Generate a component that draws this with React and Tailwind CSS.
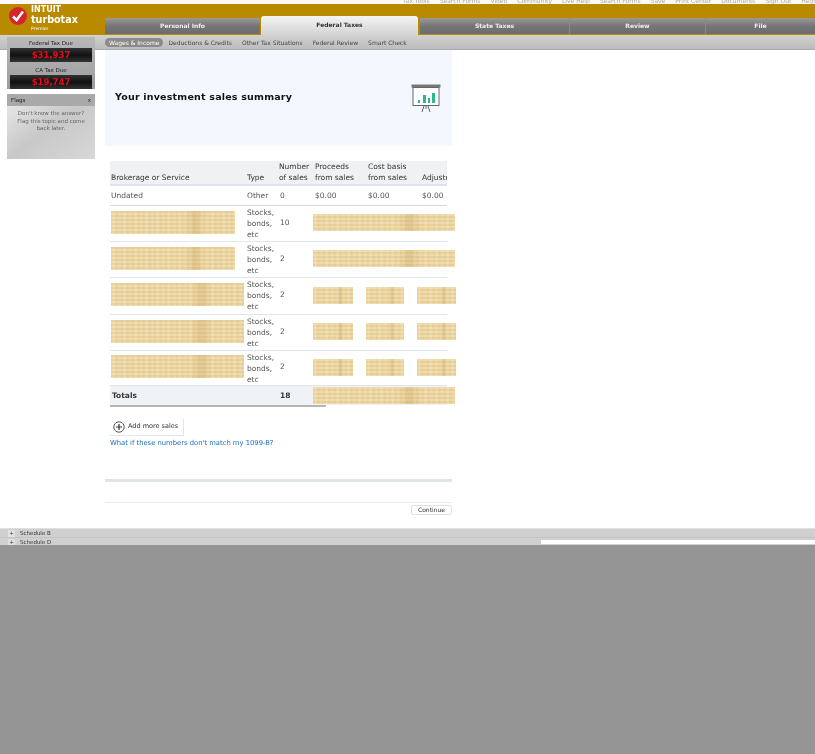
import React from 'react';

const tabs = [
  { name: 'Personal Info', w: 'w-[155px]' },
  { name: 'Federal Taxes', w: 'w-[157px]', active: true },
  { name: 'State Taxes', w: 'w-[149px]' },
  { name: 'Review', w: 'w-[135px]' },
  { name: 'File', w: 'flex-1' },
];

const subTabs = ['Wages & Income', 'Deductions & Credits', 'Other Tax Situations', 'Federal Review', 'Smart Check'];

const topLinks = ['Tax Tools', 'Search Forms', 'Video', 'Community', 'Live Help', 'Search Forms', 'Save', 'Print Center', 'Documents', 'Sign Out', 'Help'];

const gridCols = 'grid grid-cols-[137px_32px_36px_53px_54px_25px]';

// blurred-out paper strip used for the hidden values
const Redact = ({ className }) => (
  <div
    className={`bg-[#eed9a6] bg-[image:linear-gradient(90deg,transparent_60%,rgba(190,150,80,0.28)_68%,transparent_76%),repeating-linear-gradient(0deg,rgba(255,245,215,0.35)_0px,rgba(200,165,100,0.22)_2px,rgba(255,245,215,0.35)_4px),repeating-linear-gradient(90deg,#e9cf95_0px,#f0dfb4_3px,#e8cd92_5px,#efdaa9_9px,#e6ca8d_11px)] ${className}`}
  />
);

const SaleRow = ({ count, nameW, wide, rowH }) => (
  <div className={`${gridCols} ${rowH} border-b border-[#dfe6ee]`}>
    <div className="flex items-center pl-px pb-[3px]">
      <Redact className={`${nameW} h-[23px]`} />
    </div>
    <div className="leading-[11px] pt-px">
      Stocks,
      <br />
      bonds,
      <br />
      etc
    </div>
    <div className="flex items-center pl-px pb-[3px]">{count}</div>
    {wide ? (
      <div className="col-span-3 flex items-center pb-[2px]">
        <Redact className="w-[142px] h-[17px] shrink-0 -ml-[2px]" />
      </div>
    ) : (
      <div className="col-span-3 flex items-center gap-[13px] -ml-[2px] pb-[2px]">
        <Redact className="w-[40px] h-[17px] shrink-0" />
        <Redact className="w-[38px] h-[17px] shrink-0" />
        <Redact className="w-[39px] h-[17px] shrink-0" />
      </div>
    )}
  </div>
);

export default function App() {
  return (
    <div className="h-[754px] w-[815px] overflow-hidden flex flex-col bg-white font-['DejaVu_Sans',sans-serif] text-[7.5px] text-[#555] blur-[0.7px]">
      {/* Top strip */}
      <div className="h-[4px] overflow-hidden flex justify-end gap-[10px] text-[6px] leading-[2px] text-[#aaa] bg-[#fdfaf6] whitespace-nowrap">
        {topLinks.map((l, i) => (
          <span key={i}>{l}</span>
        ))}
      </div>

      {/* Gold header */}
      <div className="h-[31px] bg-[#b98a00] flex items-end">
        <div className="w-[105px] h-full flex items-start pl-[9px] pt-[2px] gap-[4px] shrink-0">
          <svg width="18" height="18" viewBox="0 0 18 18" className="shrink-0 mt-px">
            <circle cx="9" cy="9" r="9" fill="#d8232a" />
            <path d="M4 9.5 L7.5 13 L14 4.5" fill="none" stroke="#fff" strokeWidth="2.6" />
          </svg>
          <div className="text-white font-bold leading-none">
            <div className="text-[8px]">INTUIT</div>
            <div className="text-[9.6px] mt-px">turbotax</div>
            <div className="text-[4.5px] font-normal mt-[2px]">Premier</div>
          </div>
        </div>
        {tabs.map((t) => (
          <div
            key={t.name}
            className={
              t.active
                ? `${t.w} h-[20px] mr-[2px] -mb-px pb-[4px] rounded-t-[3px] bg-gradient-to-b from-[#f4f4f4] to-[#d2d2d2] text-[#333] font-bold text-[6px] flex items-center justify-center`
                : `${t.w} ${t.name === 'File' ? '' : 'mr-px'} h-[16px] mb-px pb-[2px] bg-gradient-to-b from-[#9a9a9a] via-[#767676] to-[#6c6c6c] text-[#eee] font-bold text-[6px] flex items-center justify-center`
            }
          >
            {t.name}
          </div>
        ))}
      </div>

      {/* Sub navigation */}
      <div className="h-[15px] bg-gradient-to-b from-[#d2d2d2] to-[#bdbdbd] border-b border-[#aaa] flex items-center pl-[105px] gap-[10px] text-[6px] text-[#444]">
        {subTabs.map((s, i) => (
          <span
            key={s}
            className={i === 0 ? 'bg-[#8a8a8a] text-white rounded-full px-[4px] py-px leading-[7px] -mr-[5px]' : 'leading-[7px]'}
          >
            {s}
          </span>
        ))}
      </div>

      {/* Body */}
      <div className="flex-1 flex min-h-0">
        <aside className="w-[105px] shrink-0 pl-[7px]">
          <div className="w-[88px] h-[52px] -mt-[13px] bg-gradient-to-b from-[#b9b9b9] to-[#9c9c9c] px-[3px] pt-[2px] text-center text-[5.5px] text-[#222]">
            <div className="leading-[8px]">Federal Tax Due</div>
            <div className="h-[14px] mt-px bg-gradient-to-b from-[#333] via-[#111] to-[#333] text-[#e00b1c] font-bold text-[8.5px] leading-[14px]">
              $31,937
            </div>
            <div className="leading-[8px] mt-[4px]">CA Tax Due</div>
            <div className="h-[14px] mt-px bg-gradient-to-b from-[#333] via-[#111] to-[#333] text-[#e00b1c] font-bold text-[8.5px] leading-[14px]">
              $19,747
            </div>
          </div>
          <div className="w-[88px] h-[65px] mt-[5px] bg-gradient-to-br from-[#ececec] via-[#c8c8c8] to-[#d8d8d8]">
            <div className="h-[12px] bg-[#a9a9a9] flex justify-between items-center px-[4px] text-[5.5px] text-[#222]">
              <span>Flags</span>
              <span>x</span>
            </div>
            <p className="mt-[4px] px-[6px] text-center text-[5.5px] leading-[7.5px] text-[#666]">
              Don't know the answer? Flag this topic and come back later.
            </p>
          </div>
        </aside>

        <main className="w-[347px] shrink-0 flex flex-col">
          {/* Title banner */}
          <div className="h-[96px] bg-[#f4f8fe] flex items-center justify-between pl-[10px] pr-[11px]">
            <h1 className="text-[9.5px] font-bold tracking-[0.2px] text-[#111] -mt-[2px]">Your investment sales summary</h1>
            <svg width="30" height="29" viewBox="0 0 30 29">
              <rect x="0.5" y="0.5" width="29" height="3" fill="#777" />
              <rect x="2" y="3.5" width="26" height="18" fill="#fff" stroke="#666" />
              <rect x="7" y="16" width="2" height="3" fill="#2eb88a" />
              <rect x="12" y="11" width="3" height="8" fill="#2eb88a" />
              <rect x="17" y="14" width="2" height="5" fill="#2eb88a" />
              <rect x="21" y="9" width="3" height="10" fill="#2eb88a" />
              <path d="M15 22 V25 M11 28 L13 22 M19 28 L17 22" stroke="#666" fill="none" />
            </svg>
          </div>

          {/* Sales table */}
          <div className="mt-[15px] ml-[5px] w-[337px] leading-[11px]">
            <div className={`${gridCols} h-[25px] pb-px bg-[#f0f1f2] border-b-2 border-[#dbe4ee] text-[#333] items-end`}>
              <div className="pl-px">Brokerage or Service</div>
              <div>Type</div>
              <div>
                Number
                <br />
                of sales
              </div>
              <div>
                Proceeds
                <br />
                from sales
              </div>
              <div>
                Cost basis
                <br />
                from sales
              </div>
              <div className="overflow-hidden whitespace-nowrap">Adjustments</div>
            </div>
            <div className={`${gridCols} h-[20px] items-center border-b border-[#cfdbe6]`}>
              <div className="pl-px">Undated</div>
              <div>Other</div>
              <div className="pl-px">0</div>
              <div>$0.00</div>
              <div>$0.00</div>
              <div>$0.00</div>
            </div>
            <SaleRow count="10" nameW="w-[124px]" wide rowH="h-[36px]" />
            <SaleRow count="2" nameW="w-[124px]" wide rowH="h-[36px]" />
            <SaleRow count="2" nameW="w-[133px]" rowH="h-[37px]" />
            <SaleRow count="2" nameW="w-[133px]" rowH="h-[36px]" />
            <SaleRow count="2" nameW="w-[133px]" rowH="h-[35px]" />
            <div className={`${gridCols} h-[19px] bg-[#f0f3f6] items-center font-bold text-[#333]`}>
              <div className="pl-[2px]">Totals</div>
              <div />
              <div className="pl-px">18</div>
              <div className="col-span-3">
                <Redact className="w-[142px] h-[17px] -ml-[2px]" />
              </div>
            </div>
            <div className="h-[2px] w-[216px] bg-[#b5b5b5]" />
          </div>

          <button className="mt-[12px] ml-[5px] w-[74px] h-[17px] flex items-center gap-[3px] pl-[3px] bg-white border-b border-r border-[#e4e4e4] text-[6.5px] text-[#333]">
            <svg width="12" height="12" viewBox="0 0 12 12">
              <circle cx="6" cy="6" r="5.2" fill="#fff" stroke="#555" />
              <path d="M6 3 V9 M3 6 H9" stroke="#333" strokeWidth="1.2" />
            </svg>
            Add more sales
          </button>
          <a className="ml-[5px] text-[6.8px] leading-[14px] text-[#1a6fc4]">What if these numbers don't match my 1099-B?</a>

          <div className="mt-[29px] h-[3px] bg-[#dfe3ea]" />
          <div className="mt-[20px] h-px bg-[#e6edf2]" />
          <div className="mt-[2px] flex justify-end">
            <button className="w-[41px] h-[10px] rounded-[2px] bg-white border border-[#e2e2e2] text-[6px] leading-[8px] text-[#333]">
              Continue
            </button>
          </div>
        </main>
      </div>

      {/* Schedule drawers */}
      <div className="h-[17px] bg-[#d0d0d0] border-t border-[#e0e0e0] text-[5.5px] text-[#333] leading-[8px]">
        <div className="h-[9px] flex items-center pl-[8px] gap-[5px] border-b border-[#c4c4c4]">
          <span className="w-[7px] h-[7px] bg-[#e4e4e4] text-center leading-[7px]">+</span>
          <span>Schedule B</span>
        </div>
        <div className="h-[7px] flex items-center pl-[8px] gap-[5px] relative">
          <span className="w-[7px] h-[6px] bg-[#e0e0e0] text-center leading-[6px]">+</span>
          <span>Schedule D</span>
          <div className="absolute right-0 top-[2px] w-[274px] h-[4px] bg-white" />
        </div>
      </div>

      {/* Dimmed lower area */}
      <div className="h-[209px] bg-[#959595]" />
    </div>
  );
}
